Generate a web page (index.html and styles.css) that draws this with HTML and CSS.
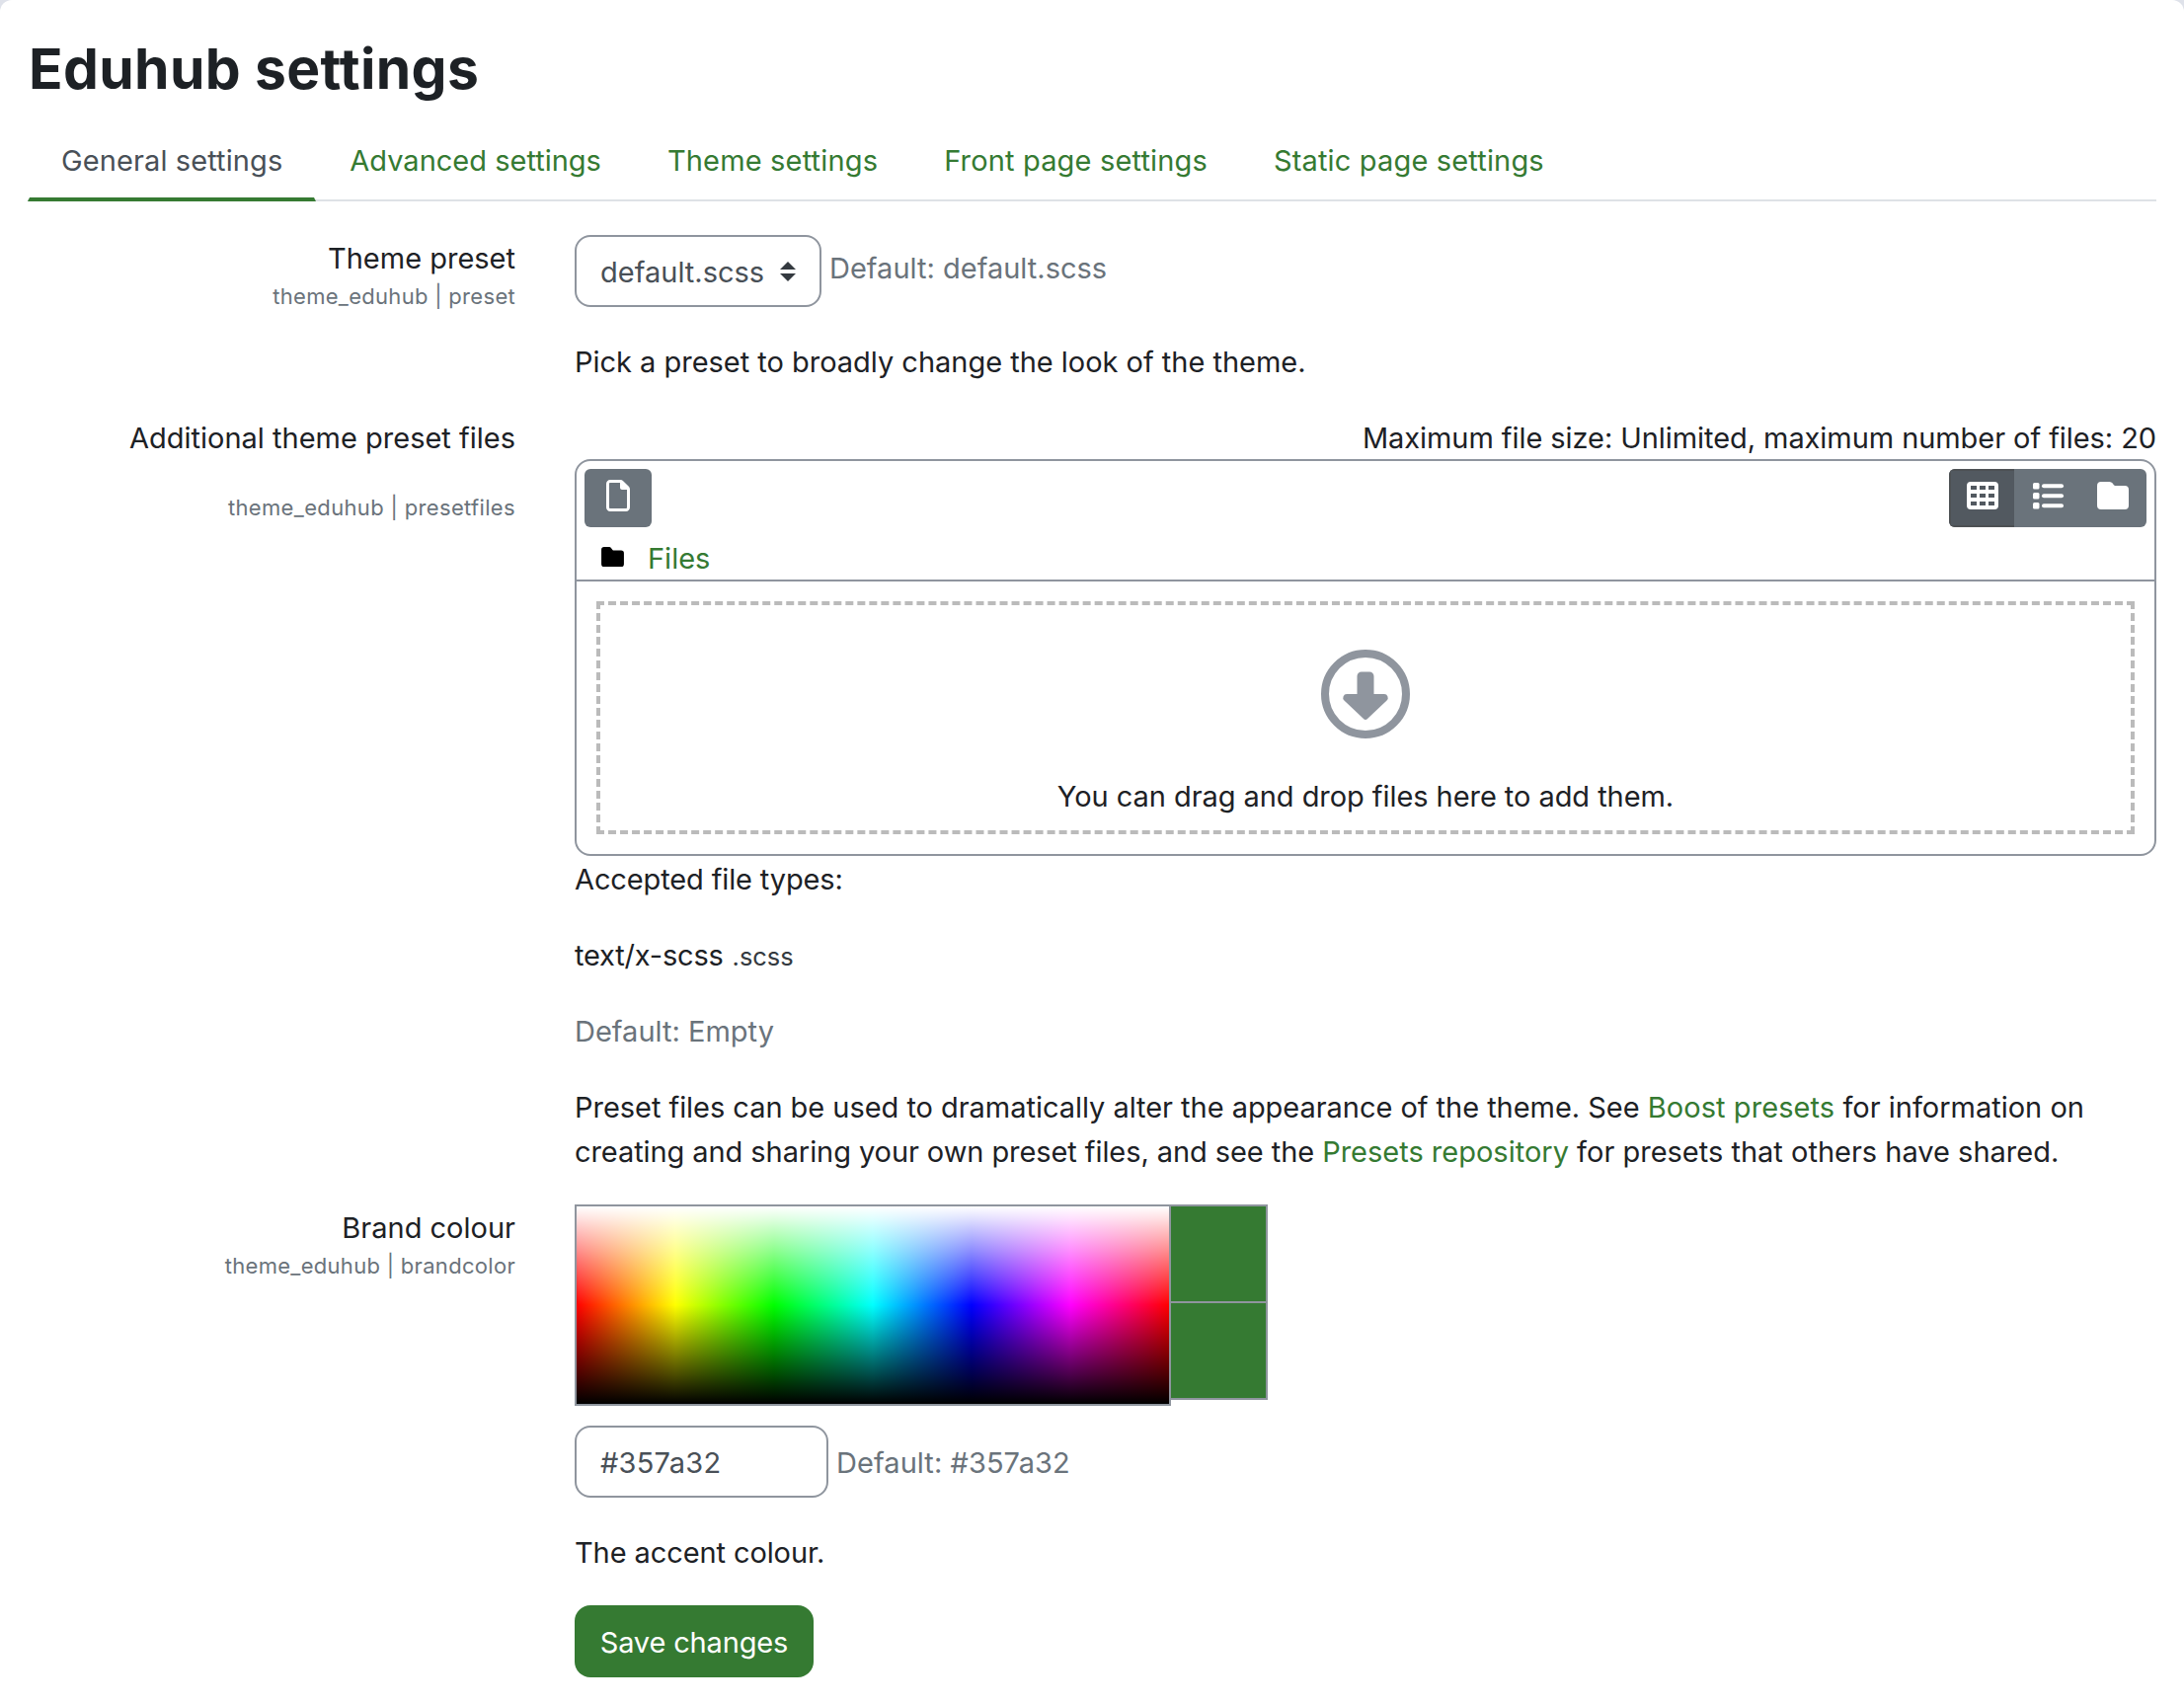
FILE: index.html
```html
<!DOCTYPE html>
<html lang="en">
<head>
<meta charset="utf-8">
<title>Eduhub settings</title>
<link rel="stylesheet" href="styles.css">
</head>
<body>
<main class="page">
  <h1 class="title">Eduhub settings</h1>
  <nav class="tabs">
    <a class="tab active">General settings</a>
    <a class="tab">Advanced settings</a>
    <a class="tab wide">Theme settings</a>
    <a class="tab wide">Front page settings</a>
    <a class="tab wide">Static page settings</a>
  </nav>

  <section class="row">
    <div class="label">
      <div>Theme preset</div>
      <div class="key">theme_eduhub | preset</div>
    </div>
    <div class="field">
      <div class="control">
        <div class="select">default.scss
          <svg class="caret" viewBox="0 0 4 5"><path d="M2 0 0 2h4zM2 5 0 3h4z"/></svg>
        </div>
        <span class="default">Default: default.scss</span>
      </div>
      <p class="hint">Pick a preset to broadly change the look of the theme.</p>
    </div>
  </section>

  <section class="row files-row">
    <div class="label">
      <div>Additional theme preset files</div>
      <div class="key spaced">theme_eduhub | presetfiles</div>
    </div>
    <div class="field">
      <div class="limits">Maximum file size: Unlimited, maximum number of files: 20</div>
      <div class="manager">
        <div class="toolbar">
          <button class="tool add">
            <svg width="24" height="32" viewBox="0 0 384 512"><path d="M0 64C0 28.700 28.700 0 64 0h165.500c17 0 33.300 6.700 45.300 18.700l90.500 90.500c12 12 18.700 28.300 18.700 45.300V448c0 35.300-28.700 64-64 64H64c-35.300 0-64-28.700-64-64zm336 384V160h-80c-17.700 0-32-14.300-32-32V48H64c-8.800 0-16 7.200-16 16v384c0 8.800 7.200 16 16 16h256c8.800 0 16-7.200 16-16z"/></svg>
          </button>
          <div class="views">
            <button class="tool on">
              <svg width="32" height="28" viewBox="0 0 32 28"><path fill-rule="evenodd" d="M4 0h24a4 4 0 0 1 4 4v20a4 4 0 0 1-4 4H4a4 4 0 0 1-4-4V4a4 4 0 0 1 4-4zM4 4v4h6V4zM13 4v4h6V4zM22 4v4h6V4zM4 12v4h6v-4zM13 12v4h6v-4zM22 12v4h6v-4zM4 20v4h6v-4zM13 20v4h6v-4zM22 20v4h6v-4z"/></svg>
            </button>
            <button class="tool list">
              <svg width="32" height="28" viewBox="0 0 32 28"><rect x="0" y="1" width="6.500" height="6.500" rx="1.500"/><rect x="0" y="11" width="6.500" height="6.500" rx="1.500"/><rect x="0" y="21" width="6.500" height="6.500" rx="1.500"/><rect x="9" y="2.200" width="22" height="4" rx="2"/><rect x="9" y="12.200" width="22" height="4" rx="2"/><rect x="9" y="22.200" width="22" height="4" rx="2"/></svg>
            </button>
            <button class="tool tree">
              <svg width="32" height="28" viewBox="0 0 32 28"><path d="M4 28h24a4 4 0 0 0 4-4V8a4 4 0 0 0-4-4H18.500a2 2 0 0 1-1.600-.8l-1.200-1.600A4 4 0 0 0 12.500 0H4a4 4 0 0 0-4 4v20a4 4 0 0 0 4 4z"/></svg>
            </button>
          </div>
        </div>
        <div class="path">
          <svg width="23" height="20" viewBox="0 0 32 28"><path d="M4 28h24a4 4 0 0 0 4-4V9a4 4 0 0 0-4-4H17.500a2 2 0 0 1-1.600-.8L14 1.600A4 4 0 0 0 11 0H4a4 4 0 0 0-4 4v20a4 4 0 0 0 4 4z"/></svg>
          <a>Files</a>
        </div>
        <div class="drop-area">
          <div class="drop">
            <svg width="90" height="90" viewBox="0 0 90 90"><circle cx="45" cy="45" r="41" fill="none" stroke="#8f959e" stroke-width="8"/><path fill="#8f959e" d="M41 22.500h8a4.500 4.500 0 0 1 4.500 4.500v18H64a3.800 3.800 0 0 1 2.600 6.500L47.300 69.800a3.200 3.200 0 0 1-4.600 0L23.400 51.500A3.800 3.800 0 0 1 26 45h10.500V27a4.500 4.500 0 0 1 4.500-4.500z"/></svg>
            <div class="drop-text">You can drag and drop files here to add them.</div>
          </div>
        </div>
      </div>
      <p class="types">Accepted file types:</p>
      <p class="type"><span class="mime">text/x-scss</span><small>.scss</small></p>
      <p class="default">Default: Empty</p>
      <p class="about"><span class="lead">Preset files can be used to dramatically alter the appearance of the theme. See </span><a class="boost">Boost presets</a> for information on<br><span class="lead2">creating and sharing your own preset files, and see the </span><a>Presets repository</a> for presets that others have shared.</p>
    </div>
  </section>

  <section class="row colour-row">
    <div class="label">
      <div>Brand colour</div>
      <div class="key">theme_eduhub | brandcolor</div>
    </div>
    <div class="field">
      <div class="picker">
        <div class="spectrum"></div>
        <div class="swatches"><div class="swatch"></div><div class="swatch"></div></div>
      </div>
      <div class="colour-control">
        <div class="input">#357a32</div>
        <span class="default hex">Default: #357a32</span>
      </div>
      <p class="accent">The accent colour.</p>
      <button class="save">Save changes</button>
    </div>
  </section>
</main>
</body>
</html>
```
FILE: styles.css
```css
* { box-sizing: border-box; }

body {
  margin: 0;
  background: #dfe2ea;
  color: #1d2125;
  font: 29px/45px Inter, "Liberation Sans", sans-serif;
}

p, h1 { margin: 0; }
svg { display: block; fill: currentColor; }
a { color: #357a32; }

button {
  margin: 0;
  border: 0;
  font: inherit;
}

.page {
  min-height: 1726px;
  padding: 34px 28px 0;
  background: #fff;
  border-radius: 12px 12px 0 0;
}

.title {
  padding-left: 1px;
  font-size: 57px;
  line-height: 72px;
  font-weight: 700;
  letter-spacing: .35px;
}

.tabs {
  display: flex;
  height: 79px;
  margin-top: 19px;
  border-bottom: 2px solid #dee2e6;
}

.tab {
  height: 79px;
  padding: 15px 32px 0;
  border: 2px solid transparent;
  border-top: 0;
  border-bottom-width: 4px;
}

.tab.active {
  color: #495057;
  letter-spacing: .1px;
  border-bottom-color: #357a32;
}

.tab.wide {
  margin-left: -1px;
  letter-spacing: .16px;
}

.row {
  display: grid;
  grid-template-columns: 494px 1602px;
  column-gap: 60px;
  margin-top: 35px;
}

.label { text-align: right; }

.key {
  font-size: 22px;
  line-height: 33px;
  letter-spacing: .3px;
  color: #6a737b;
}

.key.spaced {
  margin-top: 32px;
  letter-spacing: .34px;
}

.control {
  display: flex;
  gap: 8px;
  margin-top: -1px;
}

.select {
  display: flex;
  width: 250px;
  height: 73px;
  padding: 13px 24px 0;
  border: 2px solid #8f959e;
  border-radius: 16px;
  color: #495057;
}

.caret {
  width: 16px;
  height: 20px;
  margin: 12px 0 0 auto;
  fill: #343a40;
}

.default { color: #6a737b; }
.control .default { padding-top: 11px; }

.hint {
  margin-top: 33px;
  letter-spacing: -.02px;
}

.files-row { margin-top: 32px; }

.limits {
  text-align: right;
  letter-spacing: -.07px;
}

.manager {
  height: 402px;
  margin-top: -1px;
  border: 2px solid #8f959e;
  border-radius: 16px;
}

.toolbar {
  display: flex;
  justify-content: space-between;
  padding: 8px 8px 0;
}

.tool {
  display: flex;
  justify-content: center;
  width: 67px;
  height: 59px;
  padding: 13px 0 0;
  background: #6a737b;
  color: #fff;
}

.tool.add {
  width: 68px;
  padding-top: 11px;
  border-radius: 6px;
}

.tool.on {
  width: 66px;
  padding-top: 11px;
  background: #525960;
  border: 2px solid #4d5154;
  border-right: 0;
}

.tool.list { padding-left: 3px; }
.tool.tree { padding-right: 1px; }

.views {
  display: flex;
  border-radius: 6px;
  overflow: hidden;
}

.path {
  display: flex;
  align-items: flex-start;
  gap: 24px;
  height: 55px;
  padding: 9px 0 0 25px;
  border-bottom: 2px solid #8f959e;
}

.path svg {
  margin-top: 11px;
  color: #000;
}

.drop-area { padding: 20px; }

.drop {
  display: flex;
  flex-direction: column;
  align-items: center;
  height: 236px;
  padding-top: 45px;
  border: 4px dashed #bbb;
}

.drop-text {
  margin-top: 36px;
  letter-spacing: -.06px;
}

.types {
  margin-top: 1px;
  letter-spacing: -.13px;
}

.type { margin: 32px 0; }
.mime { letter-spacing: -.2px; }

.type small {
  margin-left: 9px;
  font-size: 25.400px;
  line-height: 38px;
  color: #343a40;
}

.about { margin-top: 32px; }
.lead { letter-spacing: -.04px; }
.lead2 { letter-spacing: -.08px; }
.boost { letter-spacing: .08px; }

.colour-row { margin-top: 31px; }
.colour-row .label { padding-top: 1px; }

.picker {
  display: flex;
  align-items: flex-start;
}

.spectrum {
  width: 604px;
  height: 204px;
  border: 2px solid #8f959e;
  background:
    linear-gradient(to bottom, #fff, rgba(255, 255, 255, 0) 50%, rgba(0, 0, 0, 0) 50%, #000),
    linear-gradient(to right, #f00, #ff0, #0f0, #0ff, #00f, #f0f, #f00);
  background-origin: padding-box;
}

.swatches { margin-left: -2px; }

.swatch {
  width: 100px;
  height: 100px;
  border: 2px solid #8f959e;
  background: #357a32;
}

.swatch + .swatch { margin-top: -2px; }

.colour-control {
  display: flex;
  gap: 8px;
  margin-top: 20px;
}

.input {
  width: 257px;
  height: 73px;
  padding: 13px 24px 0;
  border: 2px solid #8f959e;
  border-radius: 16px;
  color: #495057;
  letter-spacing: .2px;
}

.hex {
  padding-top: 15px;
  letter-spacing: .06px;
}

.accent {
  margin-top: 33px;
  letter-spacing: -.1px;
}

.save {
  display: block;
  width: 242px;
  height: 73px;
  margin-top: 31px;
  padding: 1px 0 0;
  border-radius: 16px;
  background: #357a32;
  color: #fff;
  letter-spacing: -.15px;
}
```
